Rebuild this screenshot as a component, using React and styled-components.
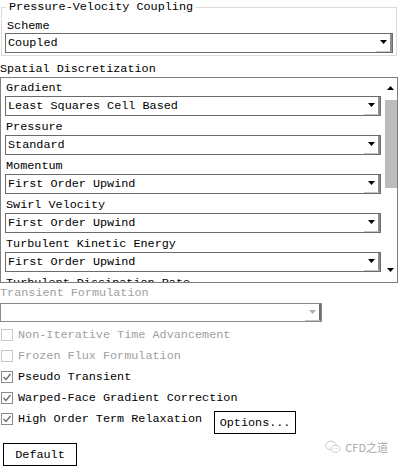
import React from 'react';
import styled, { createGlobalStyle } from 'styled-components';

const GlobalStyle = createGlobalStyle`
  html, body {
    margin: 0;
    padding: 0;
    background: #fff;
  }
  body {
    font-family: "Liberation Mono", "DejaVu Sans Mono", monospace;
    font-size: 11.8px;
    color: #000;
  }
`;

const Page = styled.div`
  position: relative;
  width: 398px;
  height: 467px;
  overflow: hidden;
  background: #fff;
`;

const Group = styled.fieldset`
  margin: 0 0 0 1px;
  padding: 0 3px 2px 3px;
  width: 396px;
  box-sizing: border-box;
  border: 1px solid #dcdcdc;
`;

const Legend = styled.legend`
  padding: 0 3px;
  margin-left: 1px;
  line-height: 14px;
  height: 14px;
`;

const Label = styled.div`
  line-height: 14px;
  height: 14px;
  white-space: nowrap;
  color: ${(p) => (p.$disabled ? '#a0a0a0' : '#000')};
  margin-top: ${(p) => p.$top || 0}px;
  margin-left: ${(p) => p.$left || 0}px;
`;

const SelectBox = styled.div`
  display: flex;
  box-sizing: border-box;
  height: ${(p) => p.$h || 20}px;
  width: ${(p) => p.$w}px;
  margin-top: ${(p) => p.$top || 0}px;
  border: 1px solid ${(p) => (p.$disabled ? '#8a8a8a' : '#6b6b6b')};
  background: #fff;
`;

const SelectText = styled.div`
  flex: 1;
  padding-left: 2px;
  display: flex;
  align-items: center;
  white-space: nowrap;
  overflow: hidden;
`;

const ArrowButton = styled.div`
  width: 16px;
  display: flex;
  align-items: center;
  justify-content: center;
  box-sizing: border-box;
  border-right: 2px solid ${(p) => (p.$disabled ? '#6e6e6e' : '#8c8c8c')};
  border-bottom: 1px solid #c4c4c4;
  color: ${(p) => (p.$disabled ? '#b0b0b0' : '#000')};
`;

const Panel = styled.div`
  display: flex;
  box-sizing: border-box;
  width: 398px;
  height: 206px;
  margin-top: 1px;
  border: 1px solid #7f7f7f;
  overflow: hidden;
`;

const PanelList = styled.div`
  flex: 1;
  padding: 3px 0 0 4px;
  overflow: hidden;
`;

const Item = styled.div`
  margin-bottom: 4px;
`;

const ScrollBar = styled.div`
  width: 13px;
  margin-left: 3px;
  display: flex;
  flex-direction: column;
  align-items: center;
`;

const ScrollArrow = styled.div`
  height: 12px;
  display: flex;
  align-items: center;
  justify-content: center;
  margin-top: ${(p) => p.$top || 0}px;
`;

const Thumb = styled.div`
  width: 12px;
  height: 88px;
  margin-top: 7px;
  background: #bcbcbc;
`;

const ScrollSpace = styled.div`
  flex: 1;
`;

const CheckRow = styled.div`
  display: flex;
  align-items: ${(p) => (p.$tall ? 'flex-start' : 'center')};
  height: ${(p) => (p.$tall ? 'auto' : '21px')};
`;

const CheckLabel = styled.label`
  display: flex;
  align-items: center;
  height: 21px;
  gap: 5px;
  white-space: nowrap;
  color: ${(p) => (p.$disabled ? '#a0a0a0' : '#000')};
`;

const Box = styled.span`
  box-sizing: border-box;
  width: 12px;
  height: 12px;
  margin-left: 1px;
  border: 1px solid ${(p) => (p.$disabled ? '#c8c8c8' : '#8a8a8a')};
  display: flex;
  align-items: center;
  justify-content: center;
  background: #fff;
`;

const Button = styled.button`
  box-sizing: border-box;
  height: 23px;
  width: ${(p) => p.$w}px;
  margin-top: ${(p) => p.$top || 0}px;
  margin-left: ${(p) => p.$left || 0}px;
  padding: 0;
  border: 1px solid #000;
  background: #fff;
  font-family: inherit;
  font-size: inherit;
  color: #000;
`;

const Watermark = styled.div`
  position: absolute;
  right: 10px;
  bottom: 12px;
  display: flex;
  align-items: center;
  gap: 4px;
  color: #a8a8a8;
  font-family: "Noto Sans CJK SC", "Liberation Sans", sans-serif;
  font-size: 11px;
`;

function Arrow({ up }) {
  return (
    <svg width="7" height="5" viewBox="0 0 7 5">
      <polygon
        points={up ? '0,5 7,5 3.5,1' : '0,0 7,0 3.5,4'}
        fill="currentColor"
      />
    </svg>
  );
}

function Select({ value, width, disabled, h, top }) {
  return (
    <SelectBox $w={width} $disabled={disabled} $h={h} $top={top}>
      <SelectText>{value}</SelectText>
      <ArrowButton $disabled={disabled}>
        <Arrow />
      </ArrowButton>
    </SelectBox>
  );
}

function Check({ label, checked, disabled }) {
  return (
    <CheckLabel $disabled={disabled}>
      <Box $disabled={disabled}>
        {checked && (
          <svg width="10" height="10" viewBox="0 0 10 10">
            <polyline
              points="1.5,5 4,7.5 8.5,2"
              fill="none"
              stroke="#6a6a6a"
              strokeWidth="1.3"
            />
          </svg>
        )}
      </Box>
      {label}
    </CheckLabel>
  );
}

const items = [
  ['Gradient', 'Least Squares Cell Based'],
  ['Pressure', 'Standard'],
  ['Momentum', 'First Order Upwind'],
  ['Swirl Velocity', 'First Order Upwind'],
  ['Turbulent Kinetic Energy', 'First Order Upwind'],
  ['Turbulent Dissipation Rate', 'First Order Upwind'],
];

export default function App() {
  return (
    <Page>
      <GlobalStyle />
      <Group>
        <Legend>Pressure-Velocity Coupling</Legend>
        <Label $top={5} $left={2}>Scheme</Label>
        <Select value="Coupled" width={388} />
      </Group>

      <Label $top={6}>Spatial Discretization</Label>
      <Panel>
        <PanelList>
          {items.map(([name, value]) => (
            <Item key={name}>
              <Label $left={1}>{name}</Label>
              <Select value={value} width={376} top={1} />
            </Item>
          ))}
        </PanelList>
        <ScrollBar>
          <ScrollArrow $top={3}>
            <Arrow up />
          </ScrollArrow>
          <Thumb />
          <ScrollSpace />
          <ScrollArrow $top={0} style={{ marginBottom: 6 }}>
            <Arrow />
          </ScrollArrow>
        </ScrollBar>
      </Panel>

      <Label $top={3} $disabled>Transient Formulation</Label>
      <Select value="" width={322} disabled h={19} top={3} />

      <div style={{ marginTop: 2 }}>
        <CheckRow>
          <Check label="Non-Iterative Time Advancement" disabled />
        </CheckRow>
        <CheckRow>
          <Check label="Frozen Flux Formulation" disabled />
        </CheckRow>
        <CheckRow>
          <Check label="Pseudo Transient" checked />
        </CheckRow>
        <CheckRow>
          <Check label="Warped-Face Gradient Correction" checked />
        </CheckRow>
        <CheckRow $tall>
          <Check label="High Order Term Relaxation" checked />
          <Button $w={82} $top={3} $left={12}>Options...</Button>
        </CheckRow>
      </div>

      <Button $w={74} $top={9} $left={3}>Default</Button>

      <Watermark>
        <svg width="16" height="14" viewBox="0 0 16 14">
          <ellipse cx="6" cy="5.5" rx="5.3" ry="4.3" fill="none" stroke="#c4c4c4" strokeWidth="0.9" />
          <ellipse cx="10.5" cy="8.8" rx="4.6" ry="3.6" fill="#fff" stroke="#c4c4c4" strokeWidth="0.9" />
          <circle cx="9" cy="8.4" r="0.6" fill="#c4c4c4" />
          <circle cx="12" cy="8.4" r="0.6" fill="#c4c4c4" />
        </svg>
        <span>CFD之道</span>
      </Watermark>
    </Page>
  );
}
